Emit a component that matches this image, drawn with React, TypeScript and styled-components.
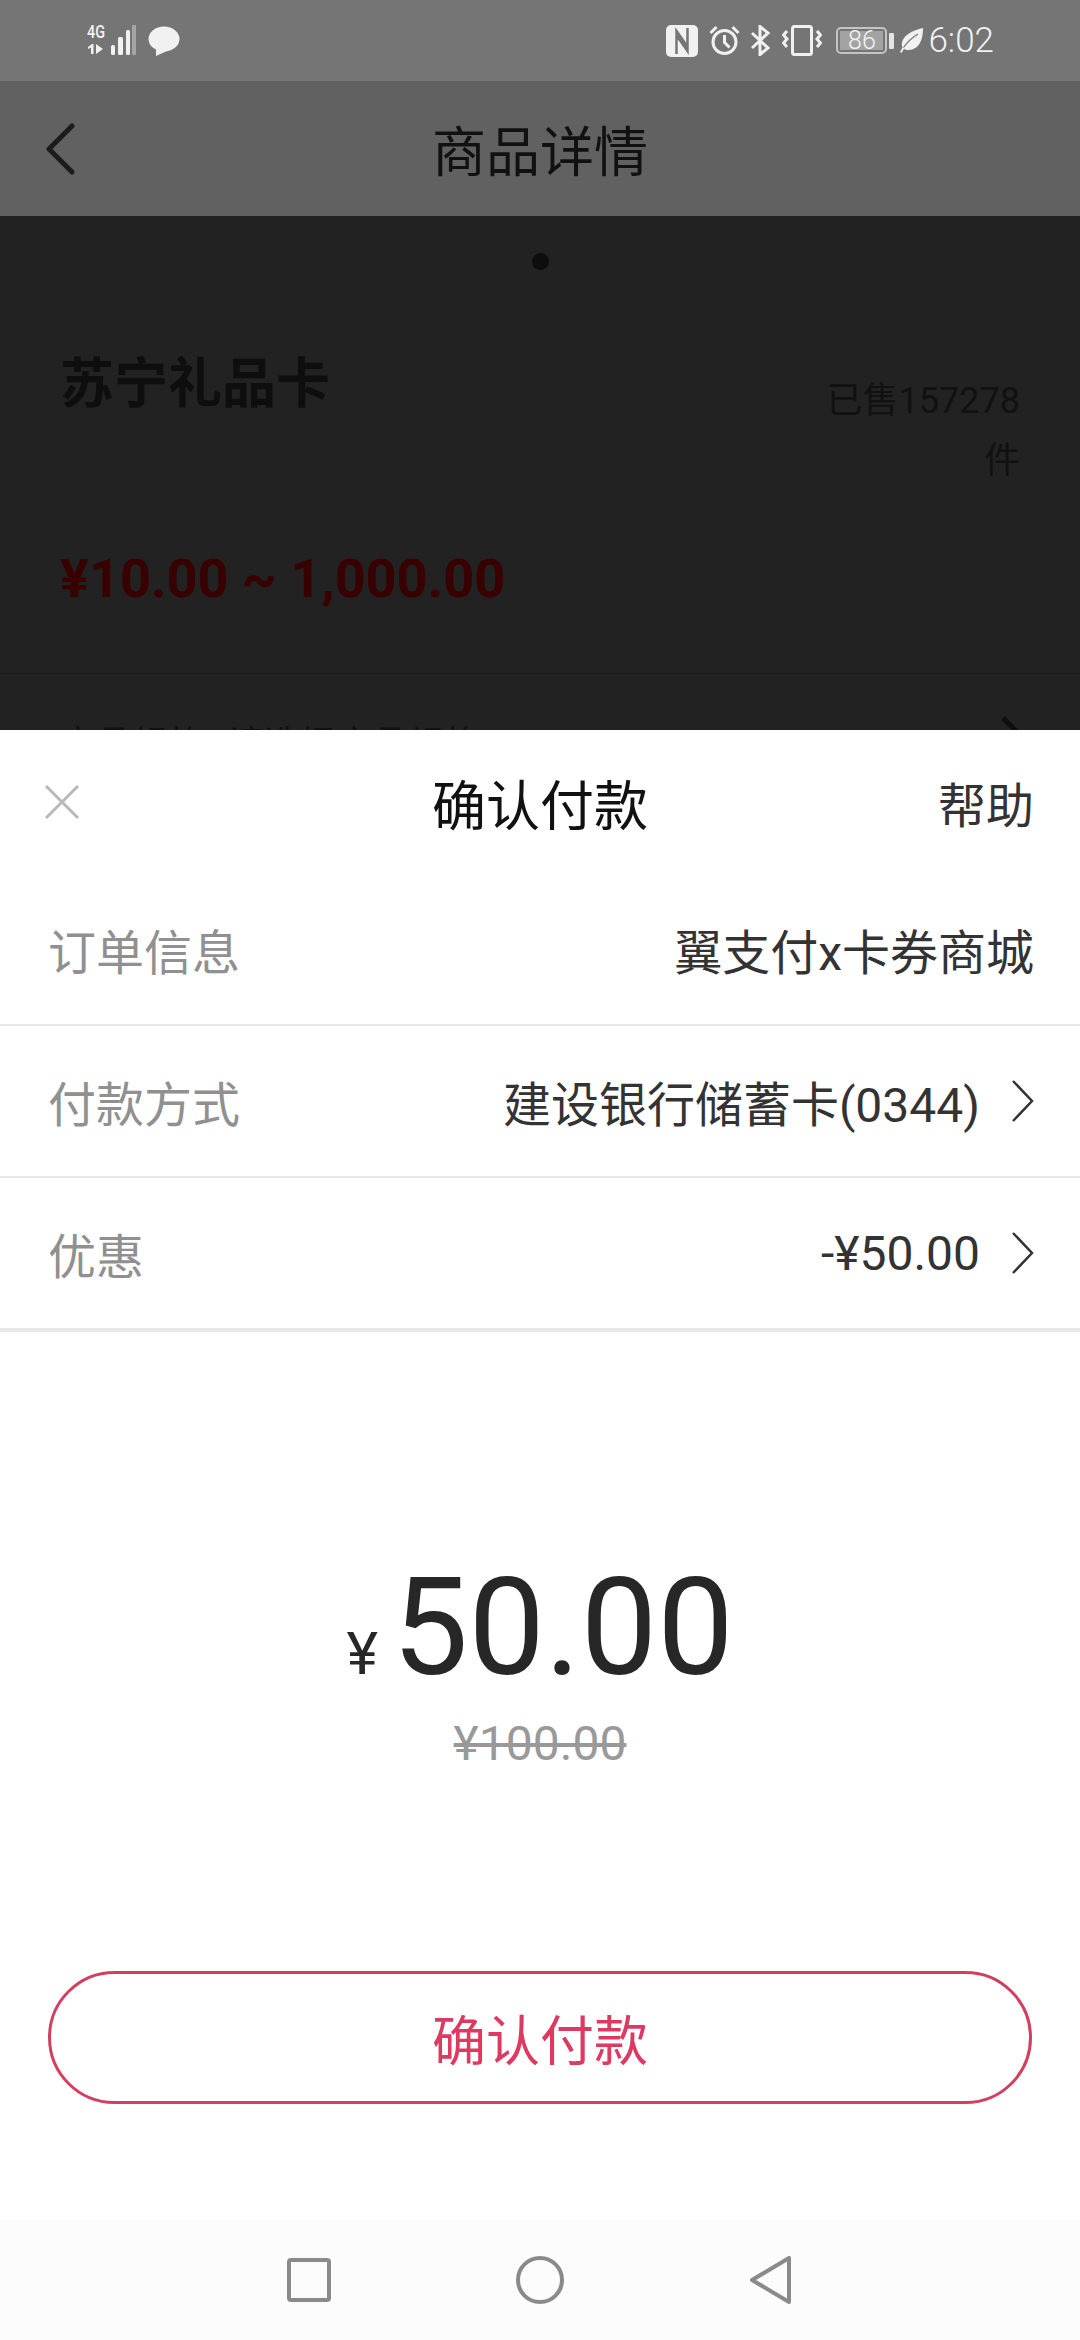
import React from "react";
import styled, { createGlobalStyle } from "styled-components";

const GlobalStyle = createGlobalStyle`
  html, body {
    margin: 0;
    padding: 0;
    background: #fff;
  }
  body {
    font-family: Roboto, "Noto Sans CJK SC", sans-serif;
  }
`;

const Screen = styled.div`
  width: 1080px;
  height: 2340px;
  display: flex;
  flex-direction: column;
  overflow: hidden;
`;

const StatusBar = styled.div`
  height: 81px;
  flex: none;
  background: #757575;
  display: flex;
  align-items: center;
  justify-content: space-between;
  padding: 0 86px;
  color: #f1f1f1;
`;

const StatusGroup = styled.div`
  display: flex;
  align-items: center;
`;

const NetworkBox = styled.div`
  position: relative;
  width: 50px;
  height: 31px;
  margin-right: 12px;
`;

const NetworkLabel = styled.span`
  position: absolute;
  left: 1px;
  top: -3px;
  font-size: 18px;
  line-height: 20px;
  font-weight: 500;
  transform: scaleX(0.8);
  transform-origin: left center;
`;

const StatusIcon = styled.svg<{ $gap?: number }>`
  display: block;
  margin-right: ${(p) => p.$gap || 0}px;
`;

const Battery = styled.div`
  width: 51px;
  height: 27px;
  box-sizing: border-box;
  border: 2px solid #c4c4c4;
  border-radius: 5px;
  padding: 2px;
  display: flex;
`;

const BatteryLevel = styled.div`
  flex: 1;
  background: #a3a3a3;
  color: #f4f4f4;
  font-size: 25px;
  font-weight: 300;
  line-height: 19px;
  text-align: center;
`;

const BatteryTip = styled.div`
  width: 5px;
  height: 16px;
  margin: 0 6px 0 2px;
  background: #e4e4e4;
  border-radius: 1px;
`;

const Clock = styled.span`
  margin-left: 5px;
  font-size: 35px;
  font-weight: 300;
  line-height: 40px;
`;

const NavBar = styled.div`
  height: 135px;
  flex: none;
  background: #616161;
  position: relative;
  display: flex;
  align-items: center;
  justify-content: center;
  color: #111;
  font-size: 54px;
`;

const BackButton = styled.svg`
  position: absolute;
  left: 44px;
  top: 42px;
`;

const Backdrop = styled.div`
  flex: 1;
  min-height: 0;
  background: #222;
  overflow: hidden;
  position: relative;
`;

const PagerDot = styled.div`
  width: 17px;
  height: 17px;
  border-radius: 50%;
  background: #0d0d0d;
  margin: 37px auto 0;
`;

const ProductHead = styled.div`
  display: flex;
  justify-content: space-between;
  align-items: flex-start;
  padding: 0 60px;
  margin-top: 76px;
`;

const ProductName = styled.div`
  font-size: 54px;
  font-weight: 700;
  line-height: 78px;
  color: #0e0e0e;
`;

const SoldCount = styled.div`
  width: 200px;
  margin-top: 25px;
  font-size: 36px;
  line-height: 60px;
  color: #111;
  text-align: right;
`;

const PriceRange = styled.div`
  margin: 53px 0 0 60px;
  font-size: 54px;
  font-weight: 700;
  line-height: 70px;
  color: #380000;
`;

const Separator = styled.div`
  height: 1px;
  margin-top: 59px;
  background: #1c1c1c;
`;

const SpecRow = styled.div`
  padding: 46px 60px 0;
  font-size: 36px;
  line-height: 50px;
  color: #111;
`;

const SpecHint = styled.span`
  margin-left: 24px;
`;

const SpecChevron = styled.svg`
  position: absolute;
  right: 56px;
  top: 499px;
`;

const Sheet = styled.div`
  height: 1610px;
  flex: none;
  background: #fff;
  display: flex;
  flex-direction: column;
`;

const SheetHeader = styled.div`
  height: 144px;
  flex: none;
  display: flex;
  align-items: center;
  justify-content: space-between;
  padding: 0 46px 0 44px;
  position: relative;
  font-size: 48px;
  color: #333;
`;

const SheetTitle = styled.div`
  position: absolute;
  left: 0;
  right: 0;
  text-align: center;
  font-size: 54px;
  color: #111;
`;

const Row = styled.div<{ $thick?: boolean }>`
  height: 150px;
  flex: none;
  display: flex;
  align-items: center;
  justify-content: space-between;
  padding: 0 46px 0 48px;
  border-bottom: ${(p) => (p.$thick ? "4px" : "2px")} solid #e8e8e8;
  font-size: 48px;
`;

const RowLabel = styled.span`
  color: #909090;
`;

const RowValue = styled.span`
  color: #333;
  display: flex;
  align-items: center;
`;

const RowChevron = styled.svg`
  margin-left: 32px;
`;

const Amount = styled.div`
  height: 130px;
  margin-top: 231px;
  display: flex;
  align-items: baseline;
  justify-content: center;
  color: #272727;
  line-height: 130px;
`;

const AmountUnit = styled.span`
  font-size: 60px;
  margin-right: 14px;
`;

const AmountValue = styled.span`
  font-size: 136px;
`;

const OriginalPrice = styled.div`
  margin-top: 21px;
  text-align: center;
  font-size: 48px;
  line-height: 60px;
  color: #999;
  text-decoration: line-through;
`;

const ConfirmButton = styled.button`
  display: block;
  width: 984px;
  height: 133px;
  margin: 197px auto 0;
  box-sizing: border-box;
  border: 3px solid #d2405f;
  border-radius: 67px;
  background: #fff;
  color: #dd3a62;
  font-family: inherit;
  font-size: 54px;
`;

const BottomNav = styled.div`
  margin-top: auto;
  height: 120px;
  flex: none;
  background: #fcfcfc;
  display: flex;
  align-items: center;
  justify-content: center;
`;

const NavSlot = styled.div`
  width: 231px;
  display: flex;
  justify-content: center;
`;

const Chevron = () => (
  <RowChevron width="22" height="42" viewBox="0 0 22 42" fill="none" stroke="#333" strokeWidth="2.5">
    <path d="M1 1l19 20L1 41" />
  </RowChevron>
);

const App = () => {
  return (
    <Screen>
      <GlobalStyle />
      <StatusBar>
        <StatusGroup>
          <NetworkBox>
            <NetworkLabel>4G</NetworkLabel>
            <svg width="50" height="31" viewBox="0 0 50 31" fill="#f1f1f1">
              <path d="M2 22l4-3h1.500v10H5v-6.500L2 24zM10 19l7 5-7 5z" />
              <rect x="25" y="20" width="4" height="10" rx="1.500" />
              <rect x="32" y="12" width="5" height="18" rx="1.500" />
              <rect x="40" y="5" width="4" height="25" rx="1.500" />
              <rect x="46" y="0" width="4" height="30" rx="1" fill="#a5a5a5" />
            </svg>
          </NetworkBox>
          <svg width="32" height="30" viewBox="0 0 32 30" fill="#f1f1f1">
            <ellipse cx="16" cy="13" rx="15.500" ry="12.500" />
            <path d="M8 21v9l11-5z" />
          </svg>
        </StatusGroup>
        <StatusGroup>
          <StatusIcon $gap={11} width="32" height="32" viewBox="0 0 32 32">
            <rect width="32" height="32" rx="5" fill="#f1f1f1" />
            <path d="M10.500 29V6L21 21M21.500 3v23L11 11" fill="none" stroke="#757575" strokeWidth="2.500" />
          </StatusIcon>
          <StatusIcon $gap={11} width="31" height="31" viewBox="0 0 31 31" fill="none" stroke="#f1f1f1" strokeWidth="3">
            <circle cx="15.500" cy="17" r="11.500" />
            <path d="M15.500 10v7.500l5 5M1.500 8l6-6M29.500 8l-6-6" />
          </StatusIcon>
          <StatusIcon $gap={12} width="19" height="31" viewBox="0 0 19 31" fill="none" stroke="#f1f1f1" strokeWidth="3">
            <path d="M1 8l16 15-8 6.500V1.500L17 8 1 23" />
          </StatusIcon>
          <StatusIcon $gap={14} width="40" height="31" viewBox="0 0 40 31" fill="none" stroke="#f1f1f1" strokeWidth="3">
            <rect x="10.500" y="1.500" width="19" height="28" rx="2" />
            <path d="M5 6L1.500 10 5 14 1.500 18 5 22M35 6l3.500 4-3.500 4 3.500 4-3.500 4" />
          </StatusIcon>
          <Battery>
            <BatteryLevel>86</BatteryLevel>
          </Battery>
          <BatteryTip />
          <svg width="23" height="25" viewBox="0 0 23 25">
            <path fill="#f1f1f1" d="M23 0C23 9 21 21 9 22c-2 .2-4-.4-5-1.200L1.500 25 0 24l2.500-4.500C0 13 5 4 23 0z" />
            <path fill="none" stroke="#757575" strokeWidth="1.200" d="M3.500 19.500C8 13 13 9 18 6" />
          </svg>
          <Clock>6:02</Clock>
        </StatusGroup>
      </StatusBar>
      <NavBar>
        <BackButton width="36" height="52" viewBox="0 0 36 52" fill="none" stroke="#1c1c1c" strokeWidth="5" strokeLinecap="round" strokeLinejoin="round">
          <path d="M28 3L5 26l23 23" />
        </BackButton>
        商品详情
      </NavBar>
      <Backdrop>
        <PagerDot />
        <ProductHead>
          <ProductName>苏宁礼品卡</ProductName>
          <SoldCount>已售157278件</SoldCount>
        </ProductHead>
        <PriceRange>¥10.00 ~ 1,000.00</PriceRange>
        <Separator />
        <SpecRow>
          商品规格<SpecHint>请选择商品规格</SpecHint>
        </SpecRow>
        <SpecChevron width="24" height="40" viewBox="0 0 24 40" fill="none" stroke="#0e0e0e" strokeWidth="5">
          <path d="M3 3l17 17L3 37" />
        </SpecChevron>
      </Backdrop>
      <Sheet>
        <SheetHeader>
          <svg width="36" height="36" viewBox="0 0 36 36" stroke="#b9b9b9" strokeWidth="3">
            <path d="M2 2l32 32M34 2L2 34" />
          </svg>
          <SheetTitle>确认付款</SheetTitle>
          <span>帮助</span>
        </SheetHeader>
        <Row>
          <RowLabel>订单信息</RowLabel>
          <RowValue>翼支付x卡券商城</RowValue>
        </Row>
        <Row>
          <RowLabel>付款方式</RowLabel>
          <RowValue>
            建设银行储蓄卡(0344)
            <Chevron />
          </RowValue>
        </Row>
        <Row $thick>
          <RowLabel>优惠</RowLabel>
          <RowValue>
            -¥50.00
            <Chevron />
          </RowValue>
        </Row>
        <Amount>
          <AmountUnit>¥</AmountUnit>
          <AmountValue>50.00</AmountValue>
        </Amount>
        <OriginalPrice>¥100.00</OriginalPrice>
        <ConfirmButton>确认付款</ConfirmButton>
        <BottomNav>
          <NavSlot>
            <svg width="44" height="44" viewBox="0 0 44 44" fill="none" stroke="#8a8a8a" strokeWidth="4" strokeLinejoin="round">
              <rect x="2" y="2" width="40" height="40" rx="2" />
            </svg>
          </NavSlot>
          <NavSlot>
            <svg width="48" height="48" viewBox="0 0 48 48" fill="none" stroke="#8a8a8a" strokeWidth="4">
              <circle cx="24" cy="24" r="22" />
            </svg>
          </NavSlot>
          <NavSlot>
            <svg width="42" height="48" viewBox="0 0 42 48" fill="none" stroke="#8a8a8a" strokeWidth="4" strokeLinejoin="round">
              <path d="M39 2v44L2 24z" />
            </svg>
          </NavSlot>
        </BottomNav>
      </Sheet>
    </Screen>
  );
};

export default App;
